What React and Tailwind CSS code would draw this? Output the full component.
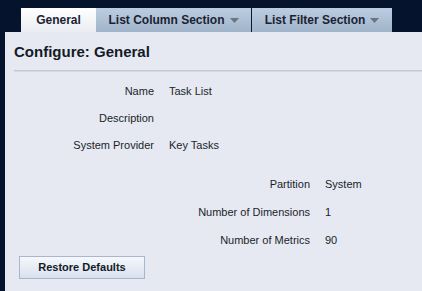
const Caret = () => (
  <svg width="9" height="5" viewBox="0 0 9 5" className="ml-[5px] mt-[1px]">
    <path d="M0 0h9L4.5 5z" fill="#6b7480" />
  </svg>
);

const Row = ({ label, value, labelW, h }) => (
  <div className={`flex ${h} items-center`}>
    <div className={`${labelW} text-right text-[#1a1f2b]`}>{label}</div>
    <div className="ml-[15px] text-[#1a1f2b]">{value}</div>
  </div>
);

export default function App() {
  return (
    <div
      className="w-[422px] h-[291px] bg-[#05142c] overflow-hidden text-[11px]"
      style={{ fontFamily: '"Liberation Sans", Arial, sans-serif' }}
    >
      <div className="flex h-[32px] pt-[8px] pl-[21px]">
        <div className="w-[75px] h-[24px] flex items-center justify-center bg-gradient-to-b from-[#ffffff] to-[#e9ecf1] font-bold text-[12px] text-[#1b2233]">
          General
        </div>
        <div className="w-[156px] h-[24px] flex items-center justify-center bg-gradient-to-b from-[#bccde0] to-[#a0b4ca] border-r border-[#0a1830] font-bold text-[12px] text-[#1b2233]">
          List Column Section
          <Caret />
        </div>
        <div className="w-[140px] h-[24px] flex items-center justify-center bg-gradient-to-b from-[#bccde0] to-[#a0b4ca] font-bold text-[12px] text-[#1b2233]">
          List Filter Section
          <Caret />
        </div>
      </div>
      <div className="ml-[5px] h-[259px] bg-[#e6e9f1] pl-[9px]">
        <div className="pt-[9px] h-[38px] text-[15px] font-bold text-[#141a26]">Configure: General</div>
        <div className="h-[2px] border-t border-[#c3c7cf] bg-[#d6d9e0]" />
        <div className="pt-[6px]">
          <Row label="Name" value="Task List" labelW="w-[140px]" h="h-[27px]" />
          <Row label="Description" value="" labelW="w-[140px]" h="h-[27px]" />
          <Row label="System Provider" value="Key Tasks" labelW="w-[140px]" h="h-[27px]" />
        </div>
        <div className="pt-[11px]">
          <Row label="Partition" value="System" labelW="w-[296px]" h="h-[28px]" />
          <Row label="Number of Dimensions" value="1" labelW="w-[296px]" h="h-[28px]" />
          <Row label="Number of Metrics" value="90" labelW="w-[296px]" h="h-[28px]" />
        </div>
        <div className="pt-[2px] pl-[5px]">
          <button className="w-[126px] h-[23px] border border-[#a8b6cf] bg-gradient-to-b from-[#f6f8fb] to-[#d7e1ef] font-bold text-[11px] text-[#141a26]">
            Restore Defaults
          </button>
        </div>
      </div>
    </div>
  );
}
